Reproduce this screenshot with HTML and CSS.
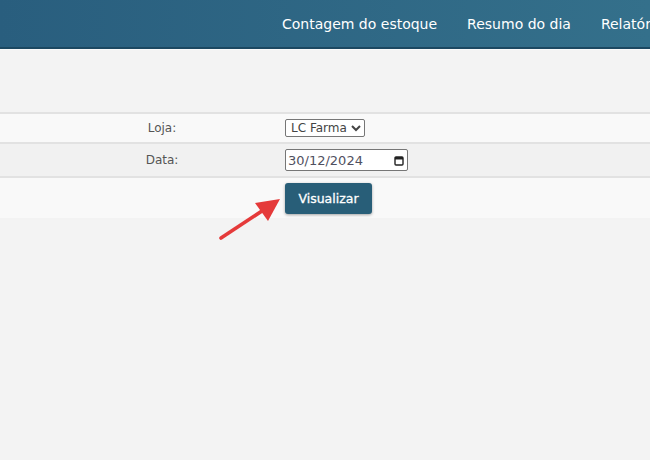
FILE: index.html
```html
<!DOCTYPE html>
<html lang="pt-BR">
<head>
    <meta charset="UTF-8">
    <meta name="viewport" content="width=device-width, initial-scale=1.0">
    <title>Resumo do dia</title>
    <link rel="stylesheet" href="styles.css">
</head>
<body>
    <header class="topbar">
        <nav class="menu">
            <a href="#">Contagem do estoque</a>
            <a href="#">Resumo do dia</a>
            <a href="#">Relatórios</a>
        </nav>
    </header>

    <div class="content">
        <form class="filtro">
            <div class="linha">
                <label class="rotulo" for="loja">Loja:</label>
                <div class="campo">
                    <select id="loja" class="sel-loja">
                        <option>LC Farma</option>
                    </select>
                </div>
            </div>
            <div class="linha alt">
                <label class="rotulo" for="data">Data:</label>
                <div class="campo">
                    <div class="inp-data">
                        <input id="data" type="text" value="30/12/2024">
                        <svg class="cal" width="10" height="11" viewBox="0 0 10 11">
                            <rect x="1" y="2" width="8" height="8" rx="1" fill="none" stroke="#222" stroke-width="1.4"/>
                            <rect x="1" y="2" width="8" height="2.5" fill="#222"/>
                        </svg>
                    </div>
                </div>
            </div>
            <div class="linha acoes">
                <div class="rotulo"></div>
                <div class="campo">
                    <button class="btn" type="button">Visualizar</button>
                </div>
            </div>
        </form>

        <!-- seta de destaque -->
        <svg class="seta" viewBox="0 0 70 50">
            <line x1="8" y1="45" x2="52" y2="16" stroke="#e53a3a" stroke-width="3.6" stroke-linecap="round"/>
            <polygon points="67,6 42,10 55,28" fill="#e53a3a"/>
        </svg>
    </div>
</body>
</html>
```

FILE: styles.css
```css
body {
    margin: 0;
    padding: 0;
    background: #f3f3f3;
    font-family: "DejaVu Sans", Verdana, sans-serif;
}

.topbar {
    height: 47px;
    background: linear-gradient(to right, #295e7e, #34708b);
    border-bottom: 2px solid #1c4861;
    box-shadow: 0 1px 0 #fafafa;
    white-space: nowrap;
    overflow: hidden;
}

.menu {
    display: flex;
    padding-left: 267px;
    height: 100%;
    align-items: center;
}

.menu a {
    color: #fff;
    text-decoration: none;
    font-size: 14px;
    padding: 0 15px;
}

.content {
    position: relative;
    padding-top: 63px;
    min-height: 300px;
}

.filtro {
    margin: 0;
    border-top: 2px solid #e2e2e2;
}

.linha {
    display: grid;
    grid-template-columns: 285px 1fr;
    align-items: center;
    background: #f9f9f9;
    height: 28px;
    border-bottom: 2px solid #e2e2e2;
}

.linha.alt {
    background: #f1f1f1;
    height: 32px;
}

.linha.acoes {
    height: 40px;
    border-bottom: none;
    align-items: start;
}

.rotulo {
    padding-left: 39px;
    text-align: center;
    font-size: 12px;
    color: #555;
}

.campo {
    font-size: 0;
}

.sel-loja {
    font-family: "DejaVu Sans", Verdana, sans-serif;
    font-size: 12px;
    color: #444;
    height: 18px;
    padding: 0 1px;
    border: 1px solid #767676;
    border-radius: 2px;
    background: #fff;
}

.inp-data {
    display: flex;
    align-items: center;
    width: 123px;
    height: 22px;
    box-sizing: border-box;
    padding: 0 3px 0 2px;
    border: 1px solid #767676;
    border-radius: 2px;
    background: #fff;
}

.inp-data input {
    flex: 1;
    min-width: 0;
    border: none;
    padding: 0;
    outline: none;
    font-family: "DejaVu Sans", Verdana, sans-serif;
    font-size: 13px;
    color: #505060;
    background: transparent;
}

.btn {
    margin-top: 5px;
    width: 87px;
    height: 31px;
    border: none;
    border-radius: 3px;
    background: #285e78;
    color: #fff;
    font-family: "DejaVu Sans", Verdana, sans-serif;
    font-size: 12.5px;
    -webkit-text-stroke: 0.3px #fff;
    box-shadow: 0 1px 3px rgba(0, 0, 0, 0.35);
    cursor: pointer;
}

.seta {
    position: absolute;
    left: 213px;
    top: 144px;
    width: 70px;
    height: 50px;
}
```
